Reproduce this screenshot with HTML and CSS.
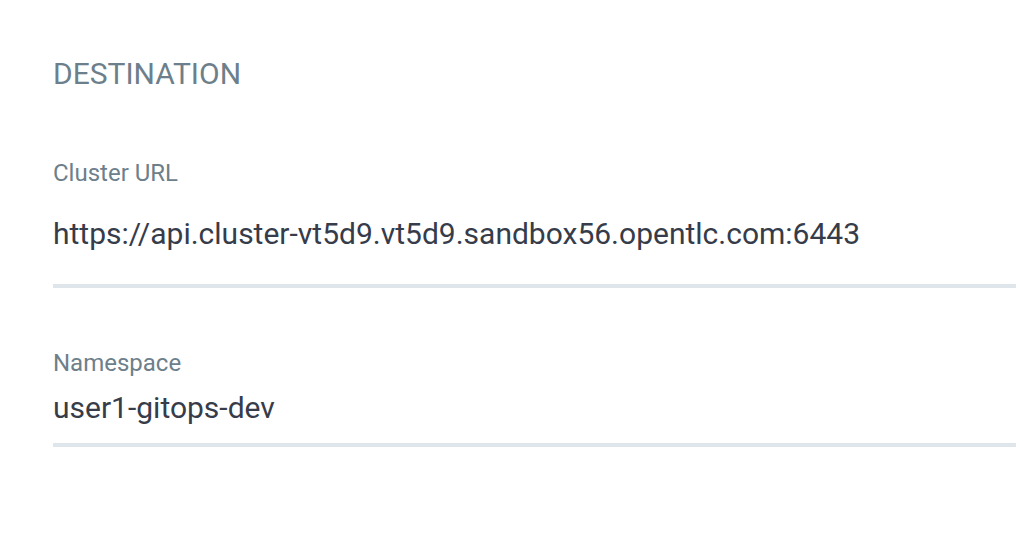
FILE: index.html
```html
<!DOCTYPE html>
<html>
<head>
<meta charset="utf-8">
<link rel="stylesheet" href="styles.css">
</head>
<body>
<div class="panel">
  <h2 class="section-title">DESTINATION</h2>
  <div class="field field-url">
    <label class="field-label">Cluster URL</label>
    <div class="field-value">https://api.cluster-vt5d9.vt5d9.sandbox56.opentlc.com:6443</div>
  </div>
  <div class="field field-ns">
    <label class="field-label">Namespace</label>
    <div class="field-value">user1-gitops-dev</div>
  </div>
</div>
</body>
</html>
```
FILE: styles.css
```css
html, body {
  margin: 0;
  padding: 0;
  background: #ffffff;
}
body {
  font-family: Roboto, "Noto Sans", sans-serif;
  width: 1016px;
  height: 558px;
  overflow: hidden;
}
.panel {
  padding: 56px 0 0 53px;
}
.section-title {
  margin: 0;
  font-weight: 400;
  font-size: 30px;
  line-height: 36px;
  color: #6d7f8b;
}
.field {
  display: flex;
  flex-direction: column;
}
.field-label {
  font-size: 24px;
  line-height: 28px;
  color: #6d7f8b;
}
.field-value {
  font-size: 30px;
  line-height: 36px;
  color: #363c4a;
  border-bottom: 4px solid #dee6eb;
}
.field-url {
  margin-top: 67px;
}
.field-url .field-value {
  padding-top: 29px;
  padding-bottom: 32px;
}
.field-ns {
  margin-top: 61px;
}
.field-ns .field-value {
  padding-top: 13px;
  padding-bottom: 17px;
}
```
